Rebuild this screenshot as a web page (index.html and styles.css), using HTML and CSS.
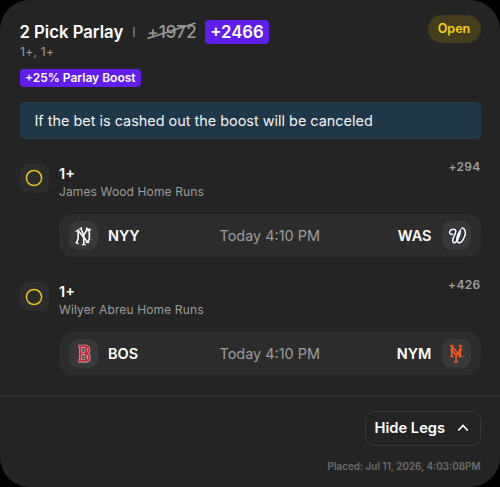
FILE: index.html
```html
<!DOCTYPE html>
<html lang="en">
<head>
    <meta charset="UTF-8">
    <meta name="viewport" content="width=device-width, initial-scale=1.0">
    <title>2 Pick Parlay</title>
    <link rel="stylesheet" href="styles.css">
</head>
<body>
    <div class="card">
        <div class="header">
            <div class="title-row">
                <h1 class="title">2 Pick Parlay</h1>
                <span class="separator"></span>
                <span class="old-odds">+1972
                    <svg class="strike" viewBox="0 0 49 18"><path d="M0.5 16.5L48.5 1" /></svg>
                </span>
                <span class="new-odds">+2466</span>
            </div>
            <span class="status">Open</span>
        </div>
        <div class="picks">1+, 1+</div>
        <div class="boost">+25% Parlay Boost</div>
        <div class="notice">If the bet is cashed out the boost will be canceled</div>

        <div class="leg">
            <div class="leg-icon"><svg class="ring" viewBox="0 0 18 18"><circle cx="9" cy="9" r="7.6" /></svg></div>
            <div class="leg-info">
                <div class="leg-pick">1+</div>
                <div class="leg-market">James Wood Home Runs</div>
            </div>
            <div class="leg-odds">+294</div>
            <div class="game">
                <div class="logo">
                    <svg viewBox="0 0 90 90" class="yankees">
                        <path d="M28 28V54L23 67M27 28L56 63M62 28V54L58 64" />
                        <path d="M36 22L45 44L56 23M45 43V71" />
                        <path class="serif" d="M20 32L31 26M32 24L40 20M52 21L62 26M56 31L67 25M20 65L29 70M51 65L62 66M39 72H51" />
                        <path class="tm" d="M67 57H71" />
                    </svg>
                </div>
                <div class="team">NYY</div>
                <div class="time">Today 4:10 PM</div>
                <div class="team">WAS</div>
                <div class="logo">
                    <svg viewBox="0 0 90 90">
                        <path class="nats-edge" d="M34 40C27 43 20 37 24 31C28 24 42 23 42 31C42 41 28 56 34 65C41 73 56 48 56 29C46 42 41 61 50 66C61 71 75 41 70 29C68 23 63 20 59 23" />
                        <path class="nats" d="M34 40C27 43 20 37 24 31C28 24 42 23 42 31C42 41 28 56 34 65C41 73 56 48 56 29C46 42 41 61 50 66C61 71 75 41 70 29C68 23 63 20 59 23" />
                        <path class="tm" d="M69 64H73" />
                    </svg>
                </div>
            </div>
        </div>

        <div class="leg">
            <div class="leg-icon"><svg class="ring" viewBox="0 0 18 18"><circle cx="9" cy="9" r="7.6" /></svg></div>
            <div class="leg-info">
                <div class="leg-pick">1+</div>
                <div class="leg-market">Wilyer Abreu Home Runs</div>
            </div>
            <div class="leg-odds">+426</div>
            <div class="game">
                <div class="logo">
                    <svg viewBox="0 0 90 90">
                        <path class="sox-edge" d="M28 22H53L60 28V38L54 44L61 50V61L54 67H28M35 22V67M52 24V65M36 44H53" />
                        <path class="sox" d="M28 22H53L60 28V38L54 44L61 50V61L54 67H28M35 22V67M52 24V65M36 44H53" />
                        <path class="sox-gap" d="M43 28V39M43 49V61" />
                        <path class="tm" d="M62 69H66" />
                    </svg>
                </div>
                <div class="team">BOS</div>
                <div class="time">Today 4:10 PM</div>
                <div class="team">NYM</div>
                <div class="logo">
                    <svg viewBox="0 0 90 90" class="mets">
                        <path d="M30 21V53M31 22L55 53M56 21V53" />
                        <path d="M29 34L43 49L57 34M43 47V69" />
                        <path class="serif" d="M24 20H36M50 20H62M24 54H36M50 54H62M25 33H35M51 33H62M36 70H50" />
                        <path class="tm" d="M64 52H69" />
                    </svg>
                </div>
            </div>
        </div>

        <div class="footer">
            <button class="toggle">
                Hide Legs
                <svg class="chevron" viewBox="0 0 12 8"><path d="M1.3 6.5L6 1.5L10.7 6.5" /></svg>
            </button>
            <div class="placed">Placed: Jul 11, 2026, 4:03:08PM</div>
        </div>
    </div>
</body>
</html>
```

FILE: styles.css
```css
* {
    box-sizing: border-box;
    margin: 0;
    padding: 0;
}

body {
    background-color: #000;
    font-family: Inter, 'Liberation Sans', sans-serif;
    color: #fff;
}

.card {
    height: 487px;
    background-color: #242424;
    border-radius: 30px;
    padding-top: 14px;
    overflow: hidden;
}

.header {
    display: flex;
    justify-content: space-between;
    height: 30px;
    margin: 0 19.5px;
}

.title-row {
    display: flex;
    align-items: center;
    height: 24px;
    margin-top: 6px;
}

.title {
    font-size: 16.7px;
    font-weight: 600;
    line-height: 24px;
}

.separator {
    width: 2px;
    height: 10px;
    margin: 0 12px 0 10px;
    background-color: #666;
}

.old-odds {
    position: relative;
    width: 48.5px;
    font-size: 17px;
    font-weight: 500;
    letter-spacing: 0.1px;
    color: #999;
}

.strike {
    position: absolute;
    left: 0;
    top: 0;
    width: 49px;
    height: 18px;
    fill: none;
    stroke: #999;
    stroke-width: 1.5;
}

.new-odds {
    width: 63.5px;
    height: 24px;
    margin-left: 9.5px;
    border-radius: 4px;
    background-color: #5f1eeb;
    font-size: 16.7px;
    font-weight: 600;
    line-height: 24px;
    text-align: center;
}

.status {
    height: 28px;
    width: 53px;
    margin-top: 1px;
    border-radius: 14px;
    background-color: #453e1e;
    color: #f5d00f;
    font-size: 12.5px;
    font-weight: 600;
    line-height: 28px;
    text-align: center;
}

.picks {
    height: 16px;
    margin: 0 20px;
    color: #9c9c9c;
    font-size: 12px;
    line-height: 16px;
    letter-spacing: 0.3px;
}

.boost {
    width: 121.5px;
    height: 18px;
    margin: 9px 0 0 19.5px;
    border-radius: 4px;
    background-color: #5f1eeb;
    font-size: 12px;
    font-weight: 600;
    line-height: 18px;
    text-align: center;
    white-space: nowrap;
}

.notice {
    height: 37.5px;
    margin: 14.5px 19.5px 24.5px;
    padding-left: 15px;
    border-radius: 4px;
    background-color: #203747;
    font-size: 14.43px;
    line-height: 38px;
    color: #f0f2f3;
}

.leg {
    display: grid;
    grid-template-columns: 29.5px 1fr auto;
    grid-template-rows: 50px 43.5px;
    column-gap: 10px;
    height: 118.3px;
    margin: 0 19.5px;
}

.leg-icon {
    display: flex;
    align-items: center;
    justify-content: center;
    width: 29.5px;
    height: 29.5px;
    border-radius: 8px;
    background-color: #2c2c2c;
}

.ring {
    width: 18px;
    height: 18px;
    fill: none;
    stroke: #e5c31a;
    stroke-width: 1.5;
}

.leg-pick {
    font-size: 14.5px;
    font-weight: 600;
    line-height: 19px;
}

.leg-market {
    color: #9c9c9c;
    font-size: 12px;
    line-height: 18px;
    letter-spacing: 0.13px;
}

.leg-odds {
    color: #9c9c9c;
    font-size: 12px;
    font-weight: 600;
    line-height: 5px;
    letter-spacing: 0.3px;
}

.game {
    grid-column: 2 / 4;
    display: grid;
    grid-template-columns: 29.5px 1fr auto 1fr 29.5px;
    column-gap: 10px;
    align-items: center;
    padding: 0 9.5px;
    border-radius: 14px;
    background-color: #2c2c2c;
}

.logo {
    width: 29.5px;
    height: 29.5px;
    border-radius: 9px;
    background-color: #383838;
}

.logo svg {
    display: block;
    width: 100%;
    height: 100%;
    fill: none;
    stroke: #fff;
    stroke-width: 5;
}

.logo .serif {
    stroke-width: 4;
}

.logo .tm {
    stroke: #999;
    stroke-width: 2;
}

.nats {
    stroke-width: 4.8;
}

.nats-edge {
    stroke: #1b2547;
    stroke-width: 8;
}

.sox {
    stroke: #c62b3c;
    stroke-width: 5.5;
}

.sox-edge {
    stroke: #c9c1c1;
    stroke-width: 9;
}

.sox-gap {
    stroke: #b5a5a6;
    stroke-width: 2.5;
}

.logo .mets {
    stroke: #f15a22;
}

.mets .tm {
    stroke: #f15a22;
}

.team {
    font-size: 14.5px;
    font-weight: 600;
}

.time + .team {
    text-align: right;
}

.time {
    color: #9c9c9c;
    font-size: 14.45px;
}

.footer {
    display: flex;
    flex-direction: column;
    align-items: flex-end;
    margin-top: -5px;
    padding: 13.5px 19.5px 0;
    border-top: 2px solid #303030;
}

.toggle {
    display: flex;
    align-items: center;
    justify-content: space-between;
    width: 116px;
    height: 35px;
    padding: 0 11px 0 9px;
    border: 1.5px solid #383838;
    border-radius: 9px;
    background: none;
    color: #fff;
    font-family: inherit;
    font-size: 14.7px;
    font-weight: 600;
}

.chevron {
    width: 12px;
    height: 8px;
    fill: none;
    stroke: #fff;
    stroke-width: 1.7;
}

.placed {
    margin-top: 13px;
    color: #6c6c6c;
    font-size: 9.9px;
    font-weight: 600;
    line-height: 15px;
}
```
